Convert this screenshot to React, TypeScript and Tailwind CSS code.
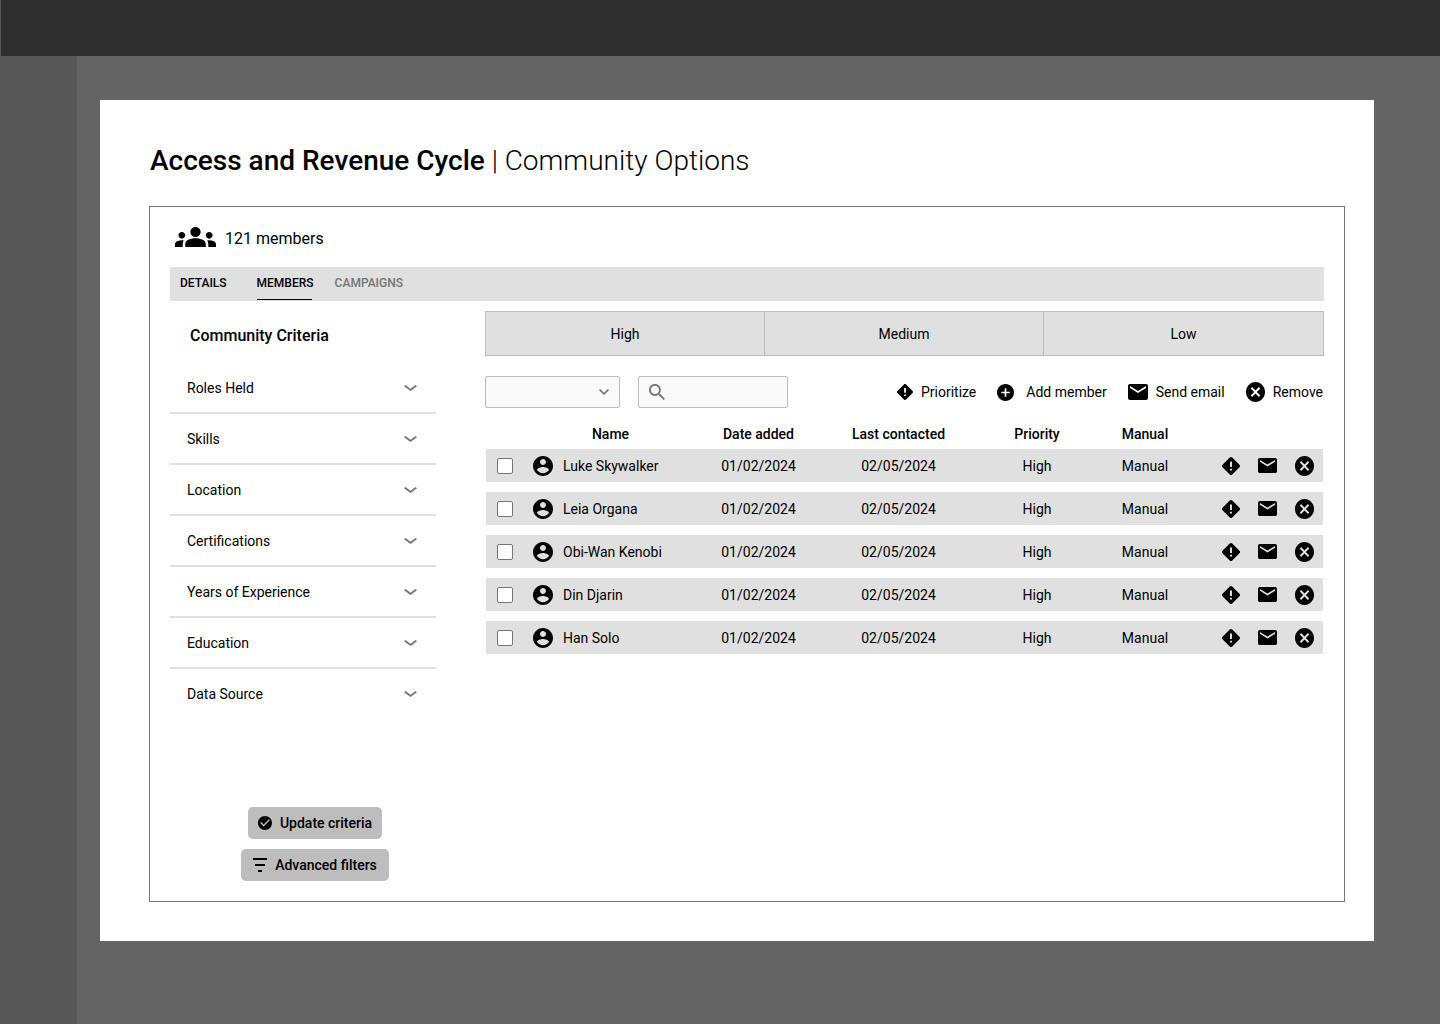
import React from "react";

type Shape = { box: string; d: string };

const shapes: Record<string, Shape> = {
  groups: {
    box: "0 6 24 12",
    d: "M12 12.75c1.63 0 3.07.39 4.24.9 1.08.48 1.76 1.56 1.76 2.73V18H6v-1.61c0-1.18.68-2.26 1.76-2.73 1.17-.52 2.61-.91 4.24-.91zM4 13c1.1 0 2-.9 2-2s-.9-2-2-2-2 .9-2 2 .9 2 2 2zm1.13 1.1c-.37-.06-.74-.1-1.13-.1-.99 0-1.93.21-2.78.58C.48 14.9 0 15.62 0 16.43V18h4.5v-1.61c0-.83.23-1.61.63-2.29zM20 13c1.1 0 2-.9 2-2s-.9-2-2-2-2 .9-2 2 .9 2 2 2zm4 3.43c0-.81-.48-1.53-1.22-1.85-.85-.37-1.79-.58-2.78-.58-.39 0-.76.04-1.13.1.4.68.63 1.46.63 2.29V18H24v-1.57zM12 6c1.66 0 3 1.34 3 3s-1.34 3-3 3-3-1.34-3-3 1.34-3 3-3z",
  },
  account: {
    box: "2 2 20 20",
    d: "M12 2C6.48 2 2 6.48 2 12s4.48 10 10 10 10-4.48 10-10S17.52 2 12 2zm0 3c1.66 0 3 1.34 3 3s-1.34 3-3 3-3-1.34-3-3 1.34-3 3-3zm0 14.2c-2.5 0-4.71-1.28-6-3.22.03-1.99 4-3.08 6-3.08 1.99 0 5.97 1.09 6 3.08-1.29 1.94-3.5 3.22-6 3.22z",
  },
  priority: {
    box: "2 2 20 20",
    d: "M12 2c-.5 0-1 .2-1.4.6l-8 8c-.8.8-.8 2 0 2.8l8 8c.8.8 2 .8 2.8 0l8-8c.8-.8.8-2 0-2.8l-8-8C13 2.2 12.5 2 12 2zm-1.100 5h2.200v6h-2.200zm0 8h2.200v2h-2.200z",
  },
  add: {
    box: "2 2 20 20",
    d: "M12 2C6.48 2 2 6.48 2 12s4.480 10 10 10 10-4.480 10-10S17.520 2 12 2zm5 11h-4v4h-2v-4H7v-2h4V7h2v4h4v2z",
  },
  mail: {
    box: "2 4 20 16",
    d: "M20 4H4c-1.100 0-1.990.9-1.990 2L2 18c0 1.100.9 2 2 2h16c1.100 0 2-.9 2-2V6c0-1.100-.9-2-2-2zm0 4l-8 5-8-5V6l8 5 8-5v2z",
  },
  remove: {
    box: "2 2 20 20",
    d: "M12 2C6.470 2 2 6.470 2 12s4.470 10 10 10 10-4.470 10-10S17.530 2 12 2zm5 13.590L15.590 17 12 13.410 8.410 17 7 15.590 10.590 12 7 8.410 8.410 7 12 10.590 15.590 7 17 8.410 13.410 12 17 15.590z",
  },
  check: {
    box: "2 2 20 20",
    d: "M12 2C6.480 2 2 6.480 2 12s4.480 10 10 10 10-4.480 10-10S17.520 2 12 2zm-2 15l-5-5 1.410-1.410L10 14.170l7.590-7.590L19 8l-9 9z",
  },
  filter: { box: "0 0 14 14", d: "M0 0h14v2H0zM2 6h10v2H2zM5 12h4v2H5z" },
  chevron: { box: "6 8.590 12 7.410", d: "M16.590 8.590L12 13.170 7.410 8.590 6 10l6 6 6-6z" },
  search: {
    box: "3 3 17.490 17.490",
    d: "M15.500 14h-.79l-.28-.27C15.410 12.590 16 11.110 16 9.500 16 5.910 13.090 3 9.500 3S3 5.910 3 9.500 5.910 16 9.500 16c1.610 0 3.090-.59 4.230-1.570l.27.28v.79l5 4.990L20.490 19l-4.990-5zm-6 0C7.010 14 5 11.990 5 9.500S7.010 5 9.500 5 14 7.010 14 9.500 11.990 14 9.500 14z",
  },
};

function Icon({ name, className }: { name: string; className: string }) {
  const { box, d } = shapes[name];
  return (
    <svg viewBox={box} preserveAspectRatio="none" fill="currentColor" aria-hidden="true" className={className}>
      <path fillRule="evenodd" d={d} />
    </svg>
  );
}

const criteria = ["Roles Held", "Skills", "Location", "Certifications", "Years of Experience", "Education", "Data Source"];
const members = ["Luke Skywalker", "Leia Organa", "Obi-Wan Kenobi", "Din Djarin", "Han Solo"];

const toolbar = [
  { label: "Prioritize", icon: "priority", size: "size-4", gap: "gap-2" },
  { label: "Add member", icon: "add", size: "size-[17px]", gap: "gap-3" },
  { label: "Send email", icon: "mail", size: "h-4 w-5", gap: "gap-2" },
  { label: "Remove", icon: "remove", size: "h-5 w-[19px]", gap: "gap-2" },
];

function Criteria() {
  return (
    <aside className="flex w-[266px] shrink-0 flex-col pt-[23px]">
      <h2 className="pl-5 text-base leading-6 font-medium">Community Criteria</h2>
      <ul className="mt-[15px]">
        {criteria.map((label) => (
          <li key={label} className="border-b-2 border-[#e0e0e0] last:border-b-0">
            <button type="button" className="flex h-[49px] w-full items-center justify-between pr-[19px] pl-[17px]">
              {label}
              <Icon name="chevron" className="h-1.5 w-[13px] text-[#757575]" />
            </button>
          </li>
        ))}
      </ul>
      <div className="mt-auto ml-6 flex flex-col items-center gap-2.5">
        <button type="button" className="flex h-8 items-center gap-2 rounded-[5px] bg-[#bdbdbd] px-2.5 font-medium">
          <Icon name="check" className="size-3.5" />
          Update criteria
        </button>
        <button type="button" className="flex h-8 items-center gap-2 rounded-[5px] bg-[#bdbdbd] px-3 font-medium">
          <Icon name="filter" className="size-3.5" />
          Advanced filters
        </button>
      </div>
    </aside>
  );
}

function MemberTable() {
  return (
    <div className="mt-[18px] px-px">
      <table className="w-full table-fixed border-separate border-spacing-0 text-center">
        <colgroup>
          <col className="w-[47px]" />
          <col className="w-[155px]" />
          <col className="w-[141px]" />
          <col className="w-[139px]" />
          <col className="w-[138px]" />
          <col className="w-[78px]" />
          <col className="w-[139px]" />
        </colgroup>
        <thead>
          <tr className="h-[23px] align-top leading-4 [&>th]:p-0 [&>th]:font-medium">
            <th aria-label="Select" />
            <th>Name</th>
            <th>Date added</th>
            <th>Last contacted</th>
            <th>Priority</th>
            <th>Manual</th>
            <th aria-label="Actions" />
          </tr>
        </thead>
        <tbody>
          {members.map((name) => (
            <tr
              key={name}
              className="h-[43px] [&>td]:border-b-10 [&>td]:border-white [&>td]:bg-[#e0e0e0] [&>td]:p-0"
            >
              <td>
                <input
                  type="checkbox"
                  aria-label={`Select ${name}`}
                  className="ml-[11px] block size-4 appearance-none rounded-xs border border-[#757575] bg-white checked:bg-black"
                />
              </td>
              <td>
                <div className="flex items-center gap-2.5">
                  <Icon name="account" className="size-5" />
                  {name}
                </div>
              </td>
              <td>01/02/2024</td>
              <td>02/05/2024</td>
              <td>High</td>
              <td>Manual</td>
              <td>
                <div className="flex items-center justify-end gap-[18px] pr-[9px]">
                  <button type="button" aria-label={`Prioritize ${name}`}>
                    <Icon name="priority" className="block size-[18px]" />
                  </button>
                  <button type="button" aria-label={`Send email to ${name}`}>
                    <Icon name="mail" className="block h-[15px] w-[19px]" />
                  </button>
                  <button type="button" aria-label={`Remove ${name}`}>
                    <Icon name="remove" className="block h-5 w-[19px]" />
                  </button>
                </div>
              </td>
            </tr>
          ))}
        </tbody>
      </table>
    </div>
  );
}

export default function App() {
  return (
    <div className="flex min-h-screen flex-col bg-[#575757] font-['Roboto',sans-serif] text-sm text-black">
      <header className="ml-px h-14 bg-[#2f2f2f]" />
      <div className="flex flex-1">
        <nav aria-label="Main" className="w-[77px] shrink-0 bg-[#575757]" />
        <main className="flex min-w-0 flex-1 bg-[#646464] pt-11 pr-[66px] pb-[83px] pl-[23px]">
          <div className="flex min-w-0 flex-1 flex-col bg-white pt-[45px] pr-[29px] pb-[39px] pl-[49px]">
            <h1 className="pl-px text-[28px] leading-8 font-light">
              <span className="font-medium">Access and Revenue Cycle</span> | Community Options
            </h1>
            <section className="mt-[29px] flex flex-1 flex-col border border-[#757575] p-5">
              <div className="flex h-10 items-start gap-[9px] pl-[5px] text-base leading-6">
                <Icon name="groups" className="h-5 w-[41px]" />
                121 members
              </div>
              <div className="flex h-[34px] items-stretch bg-[#e0e0e0] pb-px pl-2.5 text-xs font-medium">
                <button type="button" className="border-b border-transparent">
                  DETAILS
                </button>
                <button type="button" className="ml-[30px] w-[55px] border-b border-black text-left whitespace-nowrap">
                  MEMBERS
                </button>
                <button type="button" className="ml-[23px] border-b border-transparent text-[#757575]">
                  CAMPAIGNS
                </button>
              </div>
              <div className="flex flex-1 gap-[49px]">
                <Criteria />
                <div className="min-w-0 flex-1 pt-2.5">
                  <div className="grid grid-cols-3 divide-x divide-[#bdbdbd] border border-[#bdbdbd] bg-[#e0e0e0]">
                    {["High", "Medium", "Low"].map((level) => (
                      <button key={level} type="button" className="h-[43px]">
                        {level}
                      </button>
                    ))}
                  </div>
                  <div className="mt-5 flex items-center">
                    <div className="relative">
                      <select
                        aria-label="Filter members"
                        className="block h-8 w-[135px] appearance-none rounded-xs border border-[#bdbdbd] bg-[#fafafa] px-3"
                      >
                        <option value="" />
                      </select>
                      <Icon
                        name="chevron"
                        className="pointer-events-none absolute top-[13px] right-[11px] h-1.5 w-2.5 text-[#757575]"
                      />
                    </div>
                    <label className="ml-[18px] flex h-8 w-[150px] items-center gap-2 rounded-xs border border-[#bdbdbd] bg-[#fafafa] px-2.5">
                      <Icon name="search" className="size-4 shrink-0 text-[#757575]" />
                      <input type="search" aria-label="Search members" className="w-full min-w-0 bg-transparent outline-none" />
                    </label>
                    <div className="ml-auto flex items-center gap-[21px] pr-px">
                      {toolbar.map(({ label, icon, size, gap }) => (
                        <button key={label} type="button" className={`flex items-center ${gap}`}>
                          <Icon name={icon} className={size} />
                          {label}
                        </button>
                      ))}
                    </div>
                  </div>
                  <MemberTable />
                </div>
              </div>
            </section>
          </div>
        </main>
      </div>
    </div>
  );
}
